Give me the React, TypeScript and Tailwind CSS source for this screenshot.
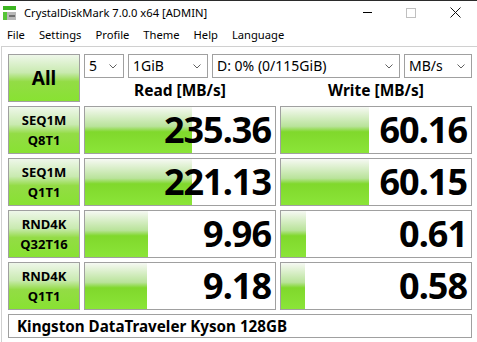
import React from 'react';

const font = { fontFamily: '"Noto Sans", "Open Sans", sans-serif' };

const rows = [
  { l1: 'SEQ1M', l2: 'Q8T1', read: '235.36', rw: 107, write: '60.16', ww: 88 },
  { l1: 'SEQ1M', l2: 'Q1T1', read: '221.13', rw: 107, write: '60.15', ww: 88 },
  { l1: 'RND4K', l2: 'Q32T16', read: '9.96', rw: 63, write: '0.61', ww: 25 },
  { l1: 'RND4K', l2: 'Q1T1', read: '9.18', rw: 62, write: '0.58', ww: 24 },
];

const btnBg = 'bg-[linear-gradient(to_bottom,#eef7e9_0%,#c9eab0_38%,#93dc45_58%,#88e232_100%)]';
const barBg = 'bg-[linear-gradient(to_bottom,#f6f9f3_0%,#b9e39a_42%,#80d82c_54%,#8be538_100%)]';

const Chevron = () => (
  <svg width="8" height="5" viewBox="0 0 8 5" className="shrink-0">
    <path d="M0.5 0.5 L4 4 L7.5 0.5" fill="none" stroke="#606060" strokeWidth="1" />
  </svg>
);

const Combo = ({ w, text }: { w: string; text: string }) => (
  <div className={`${w} h-[24px] border border-[#a0a0a0] bg-white flex items-center justify-between pl-[4px] pr-[6px] text-[14px] text-black`}>
    <span className="leading-none">{text}</span>
    <Chevron />
  </div>
);

const Cell = ({ value, width }: { value: string; width: number }) => (
  <div className="relative h-[48px] border border-[#a0a0a0] bg-white">
    <div className={`absolute left-0 top-0 bottom-0 ${barBg}`} style={{ width }} />
    <div className="relative h-full flex items-center justify-end pr-[4px] text-[36px] font-bold leading-none tracking-[-1px] text-black">
      {value}
    </div>
  </div>
);

export default function App() {
  return (
    <div className="w-[477px] h-[342px] overflow-hidden bg-white border-t border-[#2b2b2b] flex flex-col" style={font}>
      {/* title bar */}
      <div className="h-[23px] flex items-center shrink-0">
        <svg width="14" height="16" viewBox="0 0 14 16" className="ml-[3px] mr-[7px]">
          <rect x="0" y="1" width="13" height="4" fill="#3cb521" />
          <rect x="0" y="7" width="13" height="8" fill="#b8b8b8" />
          <rect x="0" y="7" width="4" height="8" fill="#56c437" />
          <rect x="6" y="10" width="6" height="2" fill="#707070" />
        </svg>
        <span className="text-[11.2px] text-black mt-[1px]">CrystalDiskMark 7.0.0 x64 [ADMIN]</span>
        <div className="ml-auto flex items-center">
          <div className="w-[44px] flex justify-center">
            <div className="w-[9px] h-[1px] bg-black" />
          </div>
          <div className="w-[44px] flex justify-center">
            <div className="w-[10px] h-[10px] border border-[#c0c0c0]" />
          </div>
          <div className="w-[44px] flex justify-center">
            <svg width="11" height="11" viewBox="0 0 11 11">
              <path d="M0.5 0.5 L10.5 10.5 M10.5 0.5 L0.5 10.5" stroke="#111" strokeWidth="1" />
            </svg>
          </div>
        </div>
      </div>
      {/* menu */}
      <div className="h-[22px] flex items-center text-[11.2px] text-black shrink-0 pl-[7px] gap-[14px]">
        <span>File</span>
        <span>Settings</span>
        <span>Profile</span>
        <span>Theme</span>
        <span>Help</span>
        <span>Language</span>
      </div>
      {/* content */}
      <div className="flex-1 ml-[1px] border-l border-t border-[#d0d0d0] pl-[6px] pt-[7px]">
        <div className="grid grid-cols-[72px_192px_192px] gap-[4px]">
          <div className={`h-[48px] border border-[#a0a0a0] ${btnBg} flex items-center justify-center text-[19px] font-bold text-black`}>
            All
          </div>
          <div className="col-span-2 h-[48px] flex flex-col">
            <div className="flex gap-[4px]">
              <Combo w="w-[40px]" text="5" />
              <Combo w="w-[80px]" text="1GiB" />
              <Combo w="w-[188px]" text="D: 0% (0/115GiB)" />
              <Combo w="w-[68px]" text="MB/s" />
            </div>
            <div className="flex-1 grid grid-cols-2 gap-[4px] text-[15.5px] font-bold text-black pt-[1px]">
              <div className="flex items-center justify-center">Read [MB/s]</div>
              <div className="flex items-center justify-center">Write [MB/s]</div>
            </div>
          </div>
          {rows.map((r, i) => (
            <React.Fragment key={i}>
              <div className={`h-[48px] border border-[#a0a0a0] ${btnBg} flex flex-col items-center justify-center text-[13px] font-bold leading-[20px] text-black`}>
                <span>{r.l1}</span>
                <span>{r.l2}</span>
              </div>
              <Cell value={r.read} width={r.rw} />
              <Cell value={r.write} width={r.ww} />
            </React.Fragment>
          ))}
          <div className="col-span-3 h-[24px] border border-[#a0a0a0] bg-white flex items-center pl-[8px] text-[15.2px] font-bold text-black">
            Kingston DataTraveler Kyson 128GB
          </div>
        </div>
      </div>
    </div>
  );
}
